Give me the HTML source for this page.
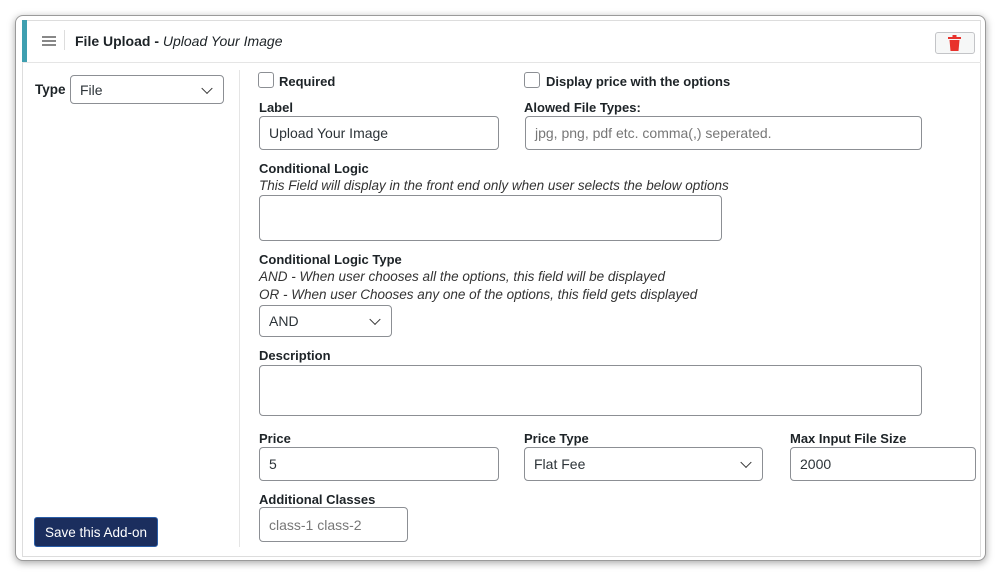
<!DOCTYPE html>
<html><head><style>
*{box-sizing:border-box}
body{margin:0;width:1000px;height:573px;background:#fff;font-family:"Liberation Sans",Arial,sans-serif;color:#1d2327;position:relative;overflow:hidden}
.card{position:absolute;left:15px;top:15px;width:971px;height:546px;border-radius:8px;border:1px solid #9a9a9a;box-shadow:0 2px 8px rgba(0,0,0,.35);background:#fff}
.a{position:absolute}
.inner{left:22px;top:20px;width:959px;height:537px;border:1px solid #ddd}
.lbl{font-weight:bold;font-size:13px}
.it{font-style:italic;font-size:13.5px;color:#333;white-space:nowrap}
.in{position:absolute;border:1px solid #8c8f94;border-radius:4px;background:#fff;font-size:14px;padding:0 9px;display:flex;align-items:center;color:#2c3338}
.ph{color:#777}
.sel::after{content:"";position:absolute;right:12px;top:50%;width:7px;height:7px;border-right:1.6px solid #333;border-bottom:1.6px solid #333;transform:translateY(-70%) rotate(45deg)}
.cb{position:absolute;width:16px;height:16px;border:1px solid #8c8f94;border-radius:3px}
</style></head><body>
<div class="card"></div>
<div class="a inner"></div>
<div class="a" style="left:22px;top:20px;width:5px;height:42px;background:#3e9fb0"></div>
<div class="a" style="left:22px;top:62px;width:959px;height:1px;background:#e5e5e5"></div>
<div class="a" style="left:42px;top:36px;width:14px;height:1.5px;background:#888;box-shadow:0 4px 0 #888,0 8px 0 #888"></div>
<div class="a" style="left:64px;top:30px;width:1px;height:20px;background:#ddd"></div>
<div class="a" style="left:75px;top:33px;font-size:14px"><b>File Upload - </b><i>Upload Your Image</i></div>
<div class="a" style="left:935px;top:32px;width:40px;height:22px;border:1px solid #c3c4c7;border-radius:3px;background:#f6f7f7"></div>
<svg class="a" style="left:947px;top:35px" width="15" height="16" viewBox="0 0 15 16"><rect x="5.5" y="0" width="4" height="2" fill="#e8322c"/><rect x="1" y="2" width="13" height="2" fill="#e8322c"/><path d="M2.5 5h10l-1 11h-8z" fill="#e8322c"/></svg>
<div class="a" style="left:239px;top:70px;width:1px;height:477px;background:#e5e5e5"></div>

<div class="a lbl" style="left:35px;top:82px;font-size:13.5px">Type</div>
<div class="in sel" style="left:70px;top:75px;width:154px;height:29px">File</div>
<div class="a" style="left:34px;top:517px;width:124px;height:30px;background:#1b2e5e;border:1px solid #2a5ea8;border-radius:3px;color:#fff;font-size:13.5px;display:flex;align-items:center;justify-content:center">Save this Add-on</div>

<div class="cb" style="left:258px;top:72px"></div>
<div class="a lbl" style="left:279px;top:74px">Required</div>
<div class="cb" style="left:524px;top:72px"></div>
<div class="a lbl" style="left:546px;top:74px">Display price with the options</div>
<div class="a lbl" style="left:259px;top:100px">Label</div>
<div class="in" style="left:259px;top:116px;width:240px;height:34px">Upload Your Image</div>
<div class="a lbl" style="left:524px;top:100px">Alowed File Types:</div>
<div class="in ph" style="left:525px;top:116px;width:397px;height:34px">jpg, png, pdf etc. comma(,) seperated.</div>
<div class="a lbl" style="left:259px;top:161px">Conditional Logic</div>
<div class="a it" style="left:259px;top:178px">This Field will display in the front end only when user selects the below options</div>
<div class="in" style="left:259px;top:195px;width:463px;height:46px"></div>
<div class="a lbl" style="left:259px;top:252px">Conditional Logic Type</div>
<div class="a it" style="left:259px;top:269px">AND - When user chooses all the options, this field will be displayed</div>
<div class="a it" style="left:259px;top:287px">OR - When user Chooses any one of the options, this field gets displayed</div>
<div class="in sel" style="left:259px;top:305px;width:133px;height:32px">AND</div>
<div class="a lbl" style="left:259px;top:348px">Description</div>
<div class="in" style="left:259px;top:365px;width:663px;height:51px"></div>
<div class="a lbl" style="left:259px;top:431px">Price</div>
<div class="in" style="left:259px;top:447px;width:240px;height:34px">5</div>
<div class="a lbl" style="left:524px;top:431px">Price Type</div>
<div class="in sel" style="left:524px;top:447px;width:239px;height:34px">Flat Fee</div>
<div class="a lbl" style="left:790px;top:431px">Max Input File Size</div>
<div class="in" style="left:790px;top:447px;width:186px;height:34px">2000</div>
<div class="a lbl" style="left:259px;top:492px">Additional Classes</div>
<div class="in ph" style="left:259px;top:507px;width:149px;height:35px">class-1 class-2</div>
</body></html>
